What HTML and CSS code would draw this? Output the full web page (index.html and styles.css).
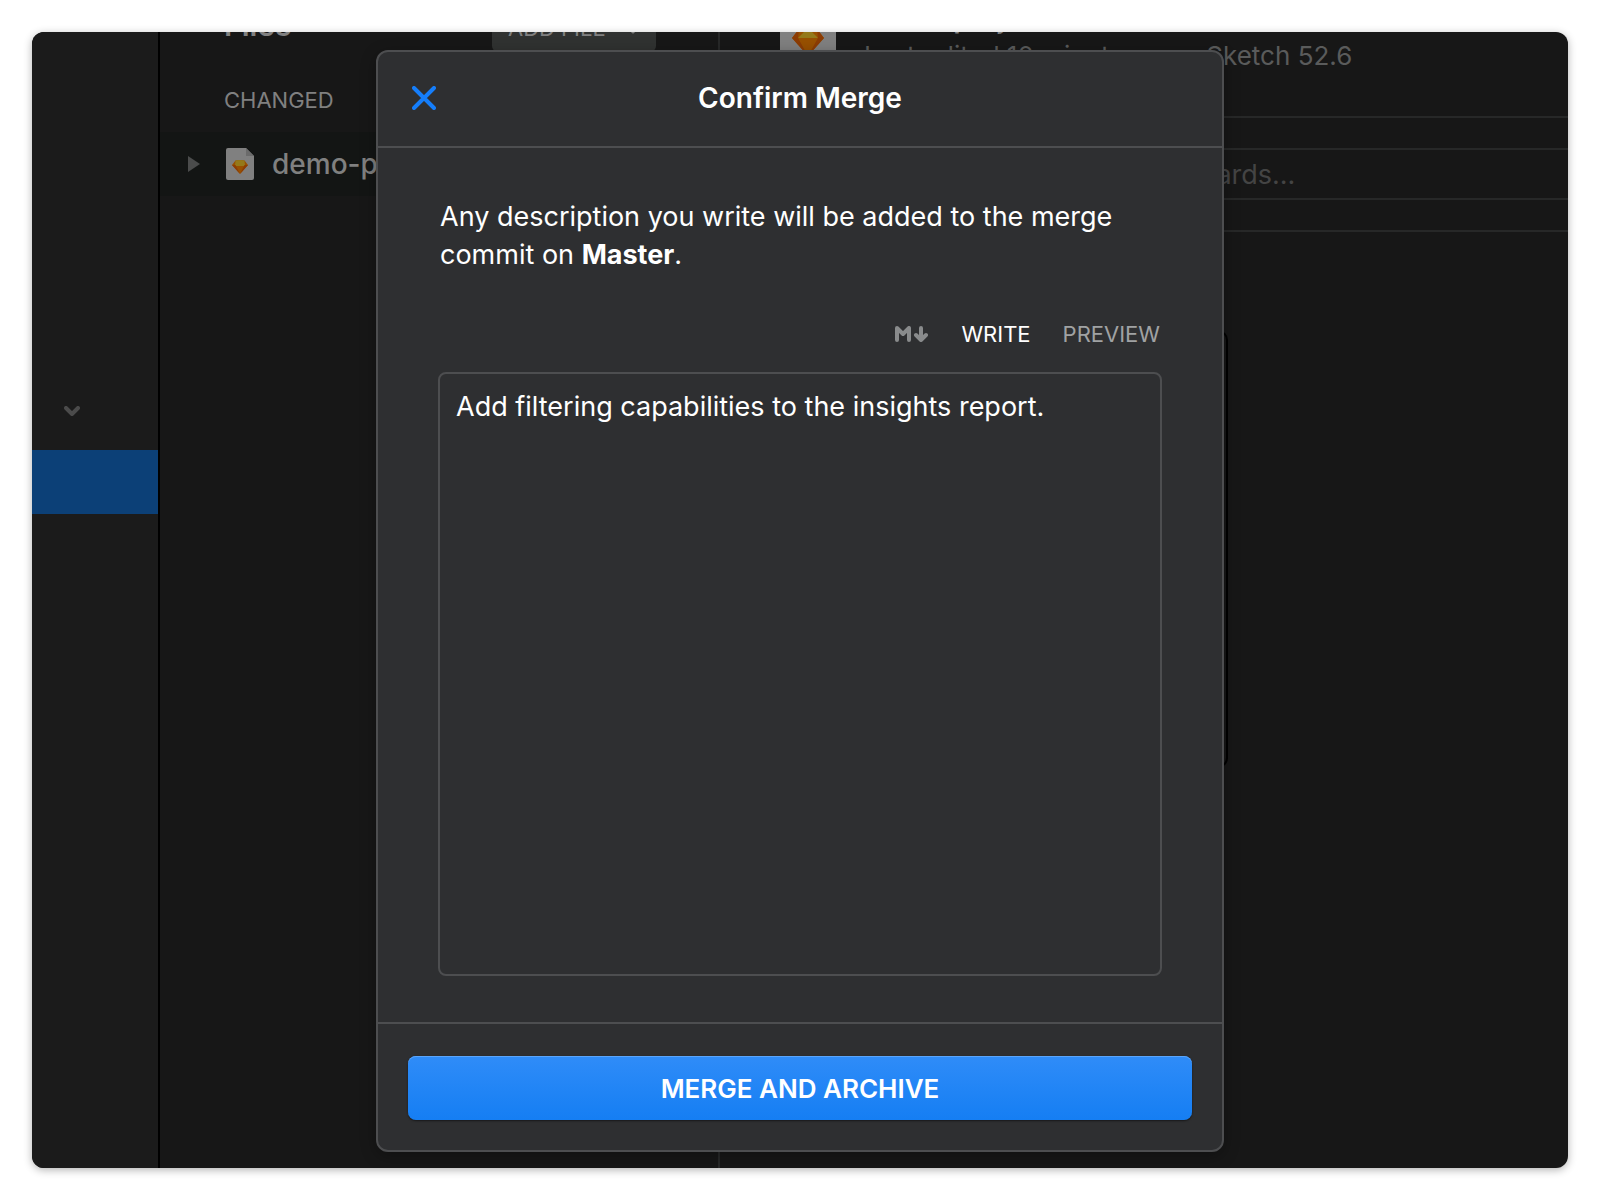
FILE: index.html
```html
<!DOCTYPE html>
<html lang="en">
<head>
<meta charset="utf-8">
<title>Confirm Merge</title>
<link rel="stylesheet" href="styles.css">
</head>
<body>
<div class="window">
  <nav class="sidebar" aria-label="Projects">
    <button class="sidebar-toggle" type="button" aria-label="Toggle section">
      <svg width="16" height="10" viewBox="0 0 16 10"><path d="M2 2l6 6 6-6" fill="none" stroke="#4b4b4b" stroke-width="4" stroke-linecap="round" stroke-linejoin="round"/></svg>
    </button>
    <a class="sidebar-selected" href="#" aria-label="Selected branch"></a>
  </nav>
  <section class="files">
    <div class="files-header">
      <h2 class="files-title">Files</h2>
      <button class="add-file" type="button">ADD FILE
        <svg width="14" height="12" viewBox="0 0 14 12"><path d="M2 5l5 5 5-5" fill="none" stroke="#808080" stroke-width="3" stroke-linecap="round" stroke-linejoin="round"/></svg>
      </button>
    </div>
    <h3 class="files-label">CHANGED</h3>
    <div class="file-row">
      <svg width="12" height="16" viewBox="0 0 12 16"><path d="M0 0l12 8-12 8z" fill="#4b4c4c"/></svg>
      <svg class="file-icon" width="28" height="32" viewBox="0 0 28 32">
        <path d="M2 0h18l8 8v22a2 2 0 0 1-2 2H2a2 2 0 0 1-2-2V2a2 2 0 0 1 2-2z" fill="#808080"/>
        <path d="M20 0l8 8h-8z" fill="#6b6b6b"/>
        <path d="M9.500 12.500L14 12l4.500.5L22 17l-8 9-8-9z" fill="#985000"/>
        <path d="M9.500 12.500L14 12l4.500.5L19 18H9z" fill="#94791a"/>
        <path d="M6 17h3.500l4.500 9zM22 17h-3.500L14 26z" fill="#8c3c04"/>
      </svg>
      <span>demo-project</span>
    </div>
  </section>
  <main class="detail">
    <header class="detail-header">
      <svg width="56" height="64" viewBox="0 0 56 64">
        <path d="M4 0h36l16 16v44a4 4 0 0 1-4 4H4a4 4 0 0 1-4-4V4a4 4 0 0 1 4-4z" fill="#808080"/>
        <path d="M19 25l9-1 9 1 7 9-16 18-16-18z" fill="#985000"/>
        <path d="M18 34l10-10 10 10z" fill="#94791a"/>
        <path d="M12 34h6l10 18zM44 34h-6L28 52zM19 25l-7 9h6zM37 25l7 9h-6z" fill="#8c3c04"/>
      </svg>
      <div>
        <h1 class="detail-title">demo-project</h1>
        <p class="detail-meta">Last edited 10 minutes ago, Sketch 52.6</p>
      </div>
    </header>
    <div class="filter">
      <input class="filter-input" type="text" aria-label="Filter artboards" placeholder="Filter pages and artboards...">
    </div>
    <div class="artboard"></div>
  </main>
  <div class="overlay">
    <form class="modal" role="dialog" aria-labelledby="modal-title">
      <header class="modal-header">
        <button class="close" type="button" aria-label="Close">
          <svg width="24" height="24" viewBox="0 0 24 24"><path d="M2 2l20 20M22 2L2 22" stroke="#157efb" stroke-width="4" stroke-linecap="round"/></svg>
        </button>
        <h2 class="modal-title" id="modal-title">Confirm Merge</h2>
      </header>
      <div class="modal-body">
        <label class="description" for="message">Any description you write will be added to the merge commit on <strong>Master</strong>.</label>
        <div class="tabs">
          <svg width="34" height="16" viewBox="0 0 34 16" fill="none" stroke="#898b8c" stroke-width="4" stroke-linecap="round" stroke-linejoin="round"><path d="M2 14V2l6 6 6-6v12M26 2v11M21 9l5 5 5-5"/></svg>
          <button class="tab tab-active" type="button">WRITE</button>
          <button class="tab" type="button">PREVIEW</button>
        </div>
        <textarea class="message" id="message">Add filtering capabilities to the insights report.</textarea>
      </div>
      <footer class="modal-footer">
        <button class="submit" type="submit">MERGE AND ARCHIVE</button>
      </footer>
    </form>
  </div>
</div>
</body>
</html>
```
FILE: styles.css
```css
* { box-sizing: border-box; }

body {
  margin: 0;
  padding: 32px;
  background: #fff;
  font-family: Inter, "Liberation Sans", sans-serif;
  color: #fff;
}

h1, h2, h3, p { margin: 0; }

button {
  padding: 0;
  border: 0;
  background: none;
  color: inherit;
  font: inherit;
}

svg { display: block; flex: none; }

.window {
  position: relative;
  display: flex;
  min-height: calc(100vh - 64px);
  overflow: hidden;
  border-radius: 12px;
  background: #171717;
  box-shadow: 0 2px 8px rgba(0, 0, 0, 0.3);
}

.sidebar {
  width: 128px;
  padding-top: 340px;
  border-right: 2px solid #000;
  background: #1b1b1b;
}

.sidebar-toggle {
  display: flex;
  align-items: center;
  height: 78px;
  padding: 0 32px;
}

.sidebar-selected {
  display: block;
  height: 64px;
  background: #0c4077;
}

.files {
  width: 560px;
  border-right: 2px solid #272828;
  color: #808080;
}

.files-header {
  display: flex;
  align-items: center;
  justify-content: space-between;
  height: 48px;
  margin-top: -28px;
  padding: 0 62px 0 64px;
}

.files-title {
  padding-bottom: 6px;
  font-size: 30px;
  font-weight: 600;
}

.add-file {
  display: flex;
  align-items: center;
  justify-content: space-between;
  width: 164px;
  height: 48px;
  padding: 0 16px;
  border-radius: 6px;
  background: #303231;
  font-size: 22px;
}

.files-label {
  height: 80px;
  padding-left: 64px;
  font-size: 22px;
  font-weight: 400;
  line-height: 96px;
}

.file-row {
  display: flex;
  align-items: center;
  height: 64px;
  padding-left: 28px;
  background: #131514;
  font-size: 28px;
  font-weight: 500;
}

.file-icon { margin: 0 18px 0 26px; }

.detail { flex: 1; }

.detail-header {
  display: flex;
  gap: 28px;
  height: 150px;
  margin-top: -64px;
  padding: 36px 60px 0;
  border-bottom: 2px solid #272828;
  color: #5a5b5b;
}

.detail-title {
  color: #808080;
  font-size: 28px;
  font-weight: 600;
  line-height: 28px;
}

.detail-meta {
  font-size: 26px;
  line-height: 48px;
  white-space: nowrap;
}

.filter {
  padding: 30px 0;
  border-bottom: 2px solid #272828;
}

.filter-input {
  display: block;
  width: 100%;
  height: 52px;
  padding: 0 0 0 216px;
  border: solid #272828;
  border-width: 2px 0;
  background: none;
  color: #808080;
  font: 27px Inter, sans-serif;
}

.filter-input::placeholder { color: #444; }

.artboard {
  width: 448px;
  height: 438px;
  margin: 98px 0 0 60px;
  border: 2px solid #000;
  border-radius: 10px;
}

.overlay {
  position: absolute;
  inset: 0;
  display: flex;
  justify-content: center;
  padding: 18px 16px 16px;
}

.modal {
  display: flex;
  flex-direction: column;
  width: 848px;
  max-width: 100%;
  border: 2px solid #4d4e50;
  border-radius: 12px;
  background: #2e2f31;
  box-shadow: 0 4px 16px rgba(0, 0, 0, 0.3);
}

.modal-header {
  display: grid;
  grid-template-columns: 24px 1fr 24px;
  align-items: center;
  height: 96px;
  padding: 0 34px 2px;
  border-bottom: 2px solid #4d4e50;
}

.modal-title {
  font-size: 28px;
  font-weight: 600;
  text-align: center;
}

.modal-body {
  display: flex;
  flex: 1;
  flex-direction: column;
  padding: 50px 60px 46px;
}

.description {
  padding: 0 2px;
  font-size: 27px;
  line-height: 38px;
}

.description strong { font-weight: 700; }

.tabs {
  display: flex;
  align-items: center;
  justify-content: flex-end;
  gap: 32px;
  margin: 46px 0 24px;
  padding-right: 2px;
}

.tab {
  color: #a0a2a3;
  font-size: 22px;
  line-height: 28px;
}

.tab-active { color: #fff; }

.message {
  flex: 1;
  width: 100%;
  padding: 14px 16px;
  border: 2px solid #4d4e50;
  border-radius: 8px;
  background: none;
  color: #fff;
  font: 27px/38px Inter, sans-serif;
  resize: none;
  outline: 0;
}

.modal-footer {
  padding: 32px 30px 30px;
  border-top: 2px solid #4d4e50;
}

.submit {
  display: block;
  width: 100%;
  height: 64px;
  border-radius: 8px;
  background: linear-gradient(#2f8cf8, #157ef3);
  box-shadow: 0 1px 2px rgba(0, 0, 0, 0.5), inset 0 1px 0 #5ba5fa;
  font-size: 26px;
  font-weight: 600;
}
```
